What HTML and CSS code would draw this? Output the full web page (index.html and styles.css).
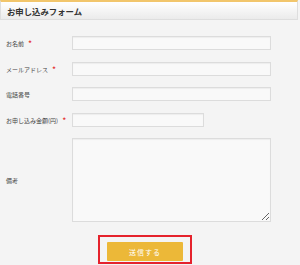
FILE: index.html
```html
<!DOCTYPE html>
<html lang="ja">
<head>
    <meta charset="UTF-8">
    <meta name="viewport" content="width=device-width, initial-scale=1.0">
    <title>お申し込みフォーム</title>
    <link rel="stylesheet" href="styles.css">
</head>
<body>

<div class="form-title">
    <h2>お申し込みフォーム</h2>
</div>

<form class="entry-form">
    <label class="field-label">お名前 <span class="req">*</span></label>
    <input type="text" class="field-input">

    <label class="field-label">メールアドレス <span class="req">*</span></label>
    <input type="text" class="field-input">

    <label class="field-label">電話番号</label>
    <input type="text" class="field-input">

    <label class="field-label">お申し込み金額(円) <span class="req">*</span></label>
    <input type="text" class="field-input short">

    <label class="field-label">備考</label>
    <textarea class="field-input memo"></textarea>
</form>

<!-- submit button (highlighted) -->
<div class="submit-area">
    <div class="highlight">
        <button type="button" class="submit-btn">送信する</button>
    </div>
</div>

</body>
</html>
```

FILE: styles.css
```css
body {
    font-family: "Noto Sans CJK JP", "Noto Sans", sans-serif;
    background: #f4f4f4;
    margin: 0;
    padding: 0;
    width: 300px;
    height: 265px;
    overflow: hidden;
}
.form-title {
    width: 296px;
    height: 17px;
    border: 1px solid #dedede;
    border-top: 2px solid #f2c66c;
    background: linear-gradient(to bottom, #ffffff, #ebebeb);
    display: flex;
    align-items: center;
}
.form-title h2 {
    margin: 0 0 0 6px;
    font-size: 8.4px;
    font-weight: bold;
    color: #333;
}
.entry-form {
    display: grid;
    grid-template-columns: 66px 199px;
    row-gap: 11.5px;
    align-items: center;
    padding: 16px 0 0 6px;
}
.field-label {
    font-size: 6px;
    color: #444;
}
.req {
    margin-left: 3px;
    color: #e53030;
    font-weight: bold;
    font-size: 7px;
}
.field-input {
    box-sizing: border-box;
    width: 199px;
    height: 14px;
    margin: 0;
    padding: 0;
    border: 1px solid #dcdcdc;
    background: #f9f9f9;
    box-shadow: inset 0 1px 1px rgba(0, 0, 0, 0.05);
}
.field-input.short {
    width: 132px;
}
.field-input.memo {
    height: 84px;
    resize: vertical;
}
.submit-area {
    padding: 13px 0 0 98px;
}
.highlight {
    display: inline-block;
    border: 2px solid #e5222c;
    padding: 5px 7px 1px 7px;
}
.submit-btn {
    display: block;
    width: 76px;
    height: 19px;
    border: none;
    border-radius: 1px;
    background: #ecb838;
    color: #fff;
    font-family: "Noto Sans CJK JP", sans-serif;
    font-size: 7px;
    letter-spacing: 1px;
    cursor: pointer;
}
```
